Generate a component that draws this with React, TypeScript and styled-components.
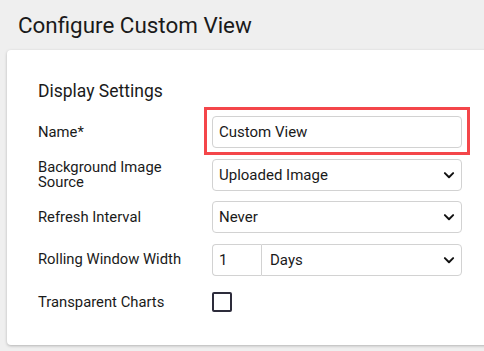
import styled, { createGlobalStyle } from 'styled-components';

//
//
//

const GlobalStyle = createGlobalStyle`
  * {
    box-sizing: border-box;
  }
  body {
    margin: 0;
    background: #efefef;
    font-family: Roboto, 'Liberation Sans', sans-serif;
    color: #212121;
    overflow: hidden;
  }
`;

const Page = styled.div`
  width: 484px;
  height: 351px;
  padding: 12px 0 0 7px;
  overflow: hidden;
`;
const Title = styled.h1`
  margin: 0 0 12px 11px;
  font-size: 22.4px;
  line-height: 26px;
  font-weight: 400;
  color: #1a1a1a;
`;
const Card = styled.div`
  width: 500px;
  height: 295px;
  background: #ffffff;
  border-radius: 4px;
  box-shadow: 0 1px 3px rgba(0, 0, 0, 0.25);
  padding: 30px 0 0 31px;
`;
const SectionTitle = styled.h2`
  margin: 0 0 14px 0;
  font-size: 17.5px;
  line-height: 22px;
  font-weight: 400;
  color: #1a1a1a;
`;
const Form = styled.div`
  display: grid;
  grid-template-columns: 174px 250px;
  grid-auto-rows: 32px;
  row-gap: 10.5px;
  align-items: center;
`;
const Label = styled.label`
  font-size: 14.8px;
  line-height: 14.5px;
  color: #1a1a1a;
  padding-right: 20px;
`;
const Field = styled.div<{ $center?: boolean }>`
  position: relative;
  height: 32px;
  display: flex;
  align-items: ${(p) => (p.$center ? 'center' : 'stretch')};
`;
const TextInput = styled.div`
  flex: 1;
  display: flex;
  align-items: center;
  padding: 0 6px;
  border: 1px solid #d2d2d2;
  border-radius: 4px;
  font-size: 15px;
  color: #1a1a1a;
`;
const Select = styled.div<{ $joined?: boolean }>`
  flex: 1;
  display: flex;
  align-items: center;
  justify-content: space-between;
  padding: 0 6px 0 ${(p) => (p.$joined ? '8px' : '6px')};
  border: 1px solid #d2d2d2;
  border-radius: ${(p) => (p.$joined ? '0 4px 4px 0' : '4px')};
  font-size: 15px;
  color: #1a1a1a;
`;
const NumberBox = styled.div`
  width: 49px;
  display: flex;
  align-items: center;
  padding: 0 6px;
  border: 1px solid #d2d2d2;
  border-right: none;
  border-radius: 4px 0 0 4px;
  font-size: 15px;
  color: #1a1a1a;
`;
const Highlight = styled.div`
  position: absolute;
  top: -9px;
  bottom: -7px;
  left: -8px;
  right: -8px;
  border: 3.5px solid #f4464a;
  pointer-events: none;
`;
const CheckBox = styled.div`
  width: 20px;
  height: 20px;
  border: 2px solid #2d2c3b;
  border-radius: 2px;
`;

//
//
//

const Chevron = () => (
  <svg width="12" height="12" viewBox="0 0 16 16">
    <path
      d="M2.5 5.5 L8 11 L13.5 5.5"
      fill="none"
      stroke="#111"
      strokeWidth="2.6"
      strokeLinecap="round"
      strokeLinejoin="round"
    />
  </svg>
);

const App = () => {
  return (
    <Page>
      <GlobalStyle />
      <Title>Configure Custom View</Title>
      <Card>
        <SectionTitle>Display Settings</SectionTitle>
        <Form>
          <Label>Name*</Label>
          <Field>
            <TextInput>Custom View</TextInput>
            <Highlight />
          </Field>

          <Label>Background Image Source</Label>
          <Field>
            <Select>
              Uploaded Image
              <Chevron />
            </Select>
          </Field>

          <Label>Refresh Interval</Label>
          <Field>
            <Select>
              Never
              <Chevron />
            </Select>
          </Field>

          <Label>Rolling Window Width</Label>
          <Field>
            <NumberBox>1</NumberBox>
            <Select $joined>
              Days
              <Chevron />
            </Select>
          </Field>

          <Label>Transparent Charts</Label>
          <Field $center>
            <CheckBox />
          </Field>
        </Form>
      </Card>
    </Page>
  );
};

export default App;
